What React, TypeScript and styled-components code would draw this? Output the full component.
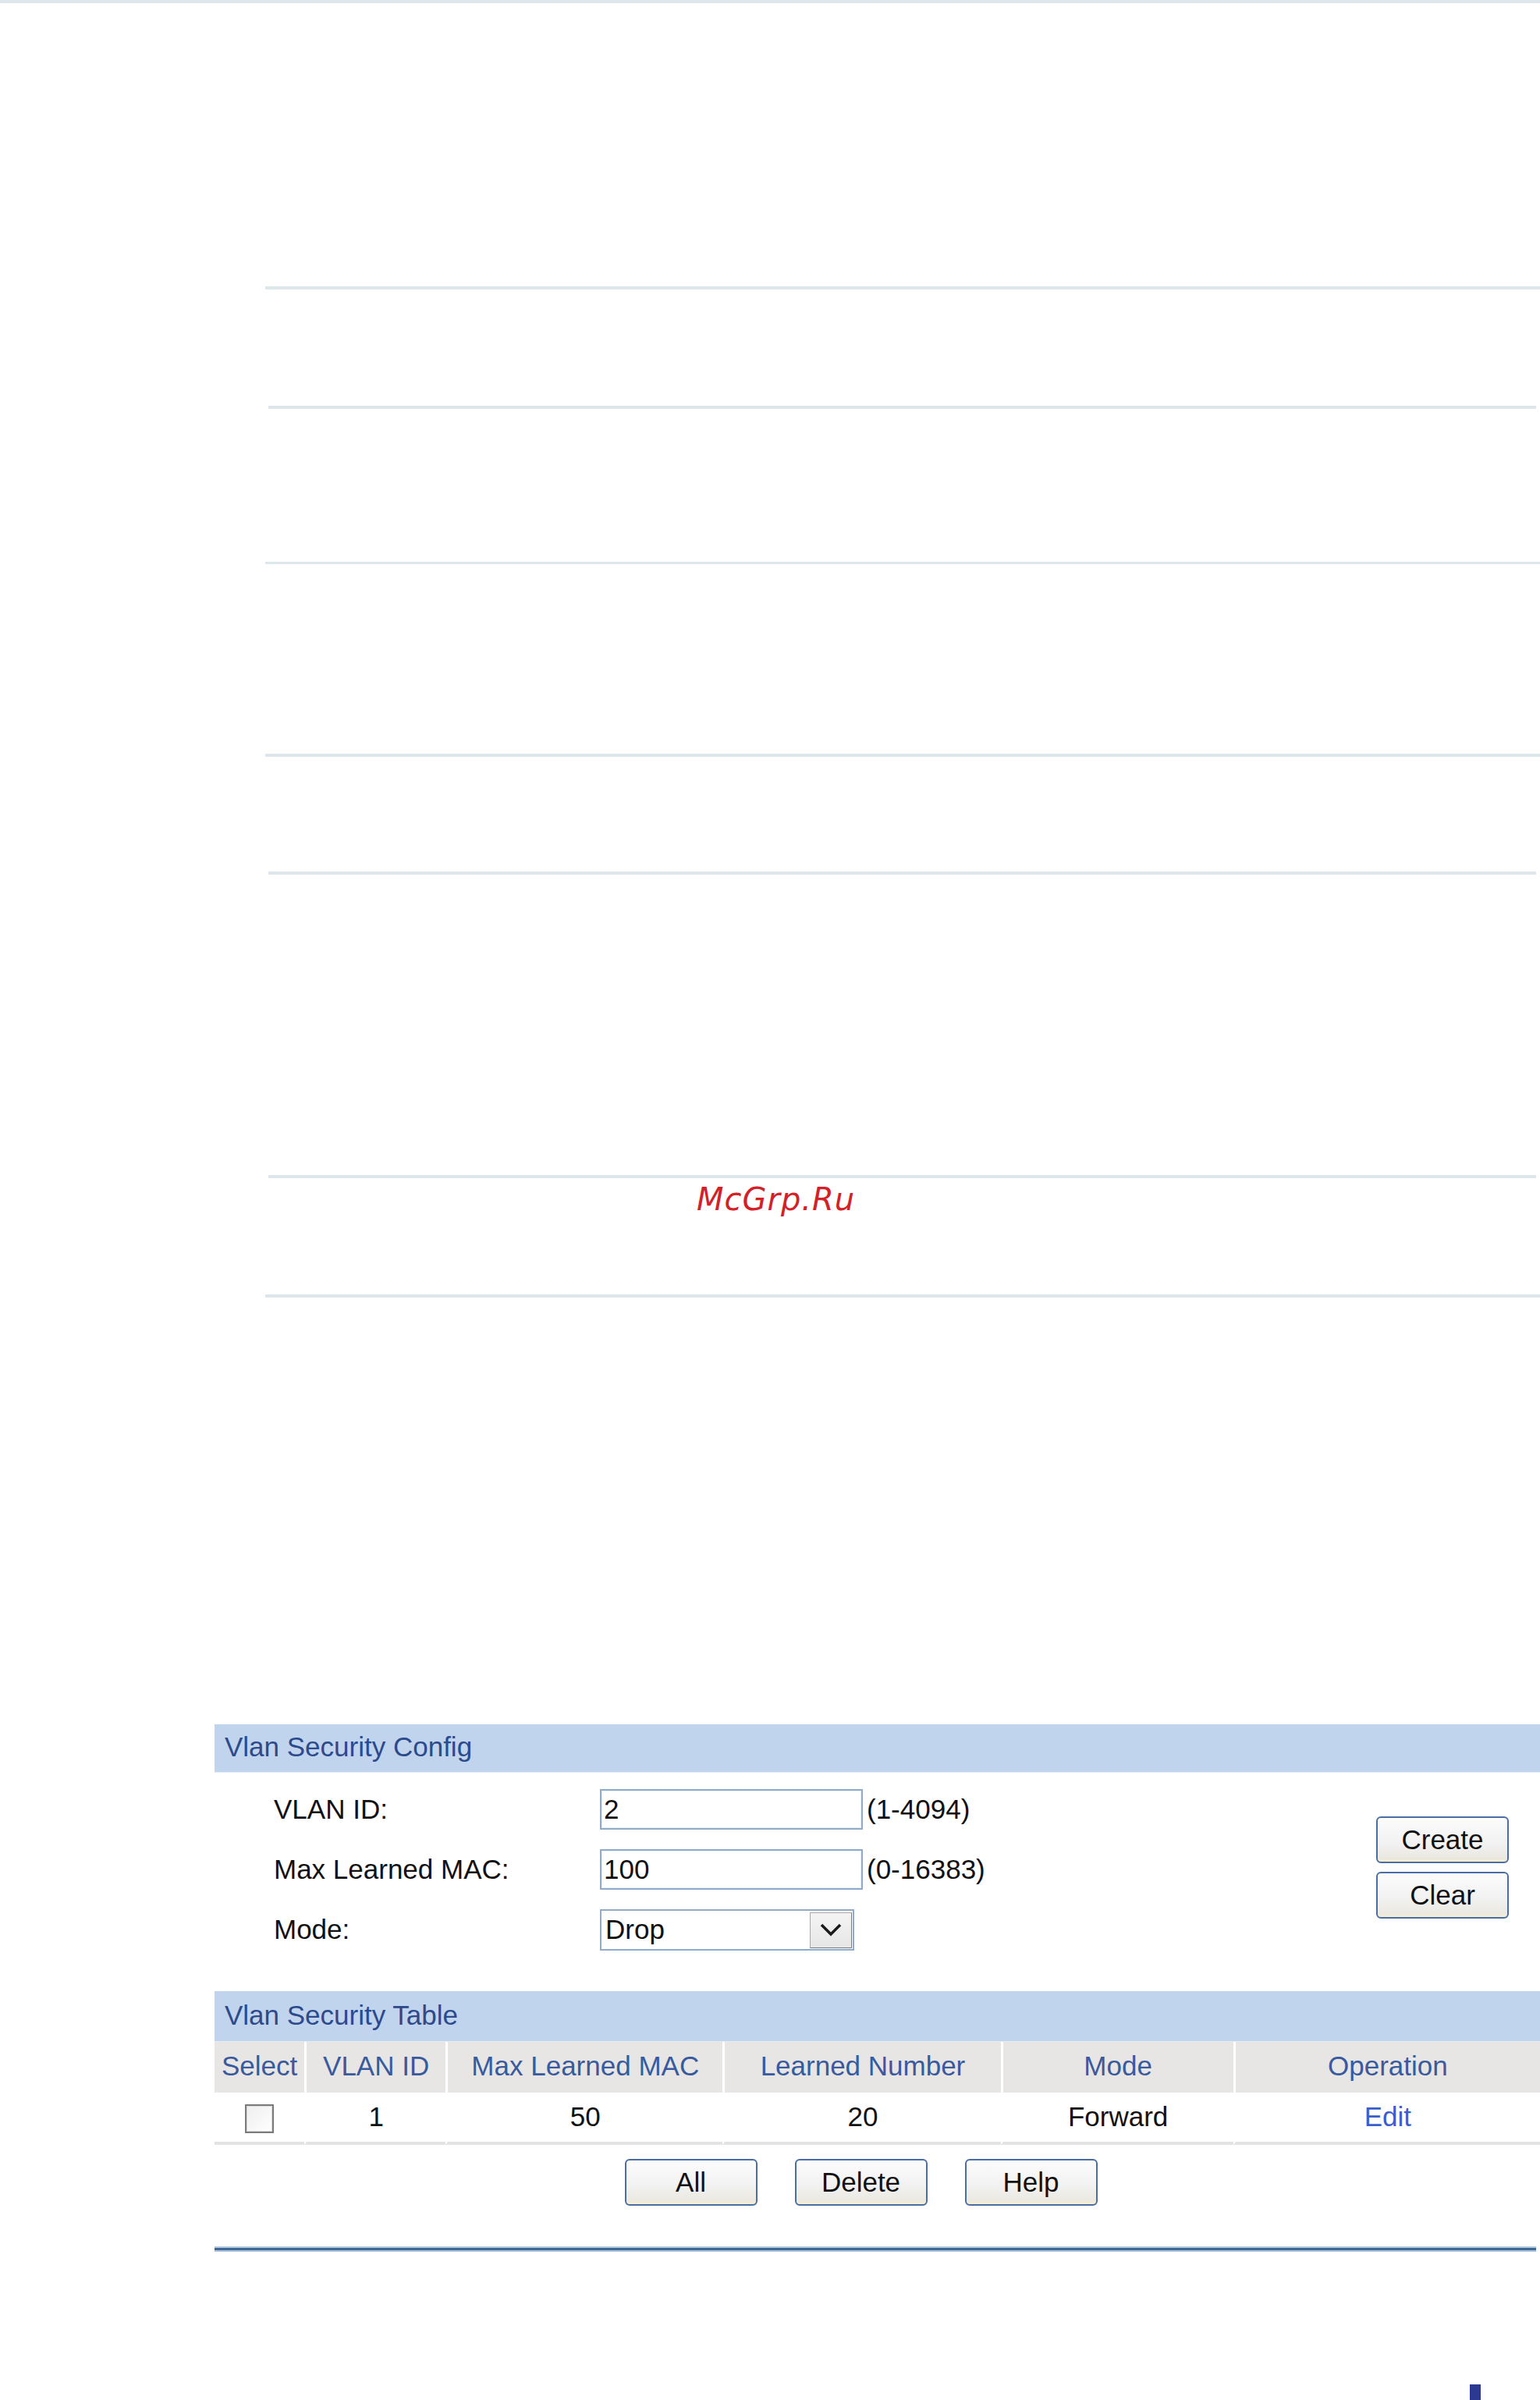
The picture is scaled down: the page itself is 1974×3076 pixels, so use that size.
import styled, { createGlobalStyle } from "styled-components";

const GlobalStyle = createGlobalStyle`
  html, body {
    margin: 0;
    padding: 0;
    background: #ffffff;
  }
  body {
    font-family: "Liberation Sans", Arial, sans-serif;
  }
`;

const rules = [
  { gap: 363, short: false },
  { gap: 149, short: true },
  { gap: 196, short: false },
  { gap: 243, short: false },
  { gap: 147, short: true },
  { gap: 385, short: true },
];

const columns = [
  { title: "Select", width: 115 },
  { title: "VLAN ID", width: 181 },
  { title: "Max Learned MAC", width: 355 },
  { title: "Learned Number", width: 356 },
  { title: "Mode", width: 298 },
  { title: "Operation", width: 393 },
];

const App = () => {
  return (
    <Page>
      <GlobalStyle />
      <TopLine />
      {rules.map((r, i) => (
        <Rule key={i} $gap={r.gap} $short={r.short} />
      ))}
      <Watermark>McGrp.Ru</Watermark>
      <Rule $gap={102} />

      <Panel>
        <SectionBar $h={62}>Vlan Security Config</SectionBar>
        <ConfigBody>
          <Fields>
            <FieldRow>
              <Label>VLAN ID:</Label>
              <TextBox>2</TextBox>
              <Hint>(1-4094)</Hint>
            </FieldRow>
            <FieldRow>
              <Label>Max Learned MAC:</Label>
              <TextBox>100</TextBox>
              <Hint>(0-16383)</Hint>
            </FieldRow>
            <FieldRow>
              <Label>Mode:</Label>
              <SelectBox>
                <SelectValue>Drop</SelectValue>
                <SelectArrow>
                  <svg width="28" height="17" viewBox="0 0 28 17">
                    <polyline
                      points="2,2 14,14 26,2"
                      fill="none"
                      stroke="#1a1a1a"
                      strokeWidth="3.5"
                    />
                  </svg>
                </SelectArrow>
              </SelectBox>
            </FieldRow>
          </Fields>
          <Actions>
            <Button>Create</Button>
            <Button>Clear</Button>
          </Actions>
        </ConfigBody>

        <SectionBar $h={65}>Vlan Security Table</SectionBar>
        <Table>
          <colgroup>
            {columns.map((c) => (
              <col key={c.title} style={{ width: c.width }} />
            ))}
          </colgroup>
          <thead>
            <tr>
              {columns.map((c) => (
                <HeadCell key={c.title}>{c.title}</HeadCell>
              ))}
            </tr>
          </thead>
          <tbody>
            <tr>
              <Cell>
                <Checkbox />
              </Cell>
              <Cell>1</Cell>
              <Cell>50</Cell>
              <Cell>20</Cell>
              <Cell>Forward</Cell>
              <Cell>
                <EditLink href="#">Edit</EditLink>
              </Cell>
            </tr>
          </tbody>
        </Table>
        <ButtonBar>
          <Button>All</Button>
          <Button>Delete</Button>
          <Button>Help</Button>
        </ButtonBar>
        <BottomRule />
      </Panel>

      <PageMark />
    </Page>
  );
};

const Page = styled.div`
  width: 1974px;
  height: 3076px;
  overflow: hidden;
  display: flex;
  flex-direction: column;
`;

const TopLine = styled.div`
  height: 4px;
  background: #dde7ec;
`;

const Rule = styled.div<{ $gap: number; $short?: boolean }>`
  height: 4px;
  background: #dce6eb;
  margin-top: ${(p) => p.$gap}px;
  margin-left: ${(p) => (p.$short ? 344 : 340)}px;
  margin-right: ${(p) => (p.$short ? 5 : 0)}px;
`;

const Watermark = styled.div`
  margin: 7px 0 0 893px;
  height: 40px;
  font-family: "DejaVu Sans", sans-serif;
  font-style: oblique;
  font-size: 40px;
  line-height: 40px;
  letter-spacing: 1px;
  color: #d42027;
`;

const Panel = styled.div`
  margin: 547px 0 0 275px;
  width: 1699px;
`;

const SectionBar = styled.div<{ $h: number }>`
  height: ${(p) => p.$h}px;
  line-height: ${(p) => p.$h - 4}px;
  background: #c1d4ee;
  color: #2d4a8c;
  font-size: 35px;
  padding-left: 13px;
  border-bottom: 1px solid #e3ebf6;
  box-sizing: border-box;
`;

const ConfigBody = styled.div`
  display: flex;
  padding: 9px 40px 40px 76px;
`;

const Fields = styled.div`
  flex: 1;
  display: flex;
  flex-direction: column;
`;

const FieldRow = styled.div`
  height: 77px;
  display: flex;
  align-items: center;
  font-size: 35px;
  color: #111;
`;

const Label = styled.div`
  width: 418px;
`;

const TextBox = styled.div`
  width: 337px;
  height: 52px;
  box-sizing: border-box;
  border: 2px solid #8eabcc;
  box-shadow: inset 0 0 0 1px #e6eef6;
  padding-left: 3px;
  display: flex;
  align-items: center;
  background: #fff;
`;

const Hint = styled.div`
  margin-left: 5px;
`;

const SelectBox = styled.div`
  width: 326px;
  height: 53px;
  box-sizing: border-box;
  border: 2px solid #8eabcc;
  display: flex;
  align-items: stretch;
  background: #fff;
`;

const SelectValue = styled.div`
  flex: 1;
  display: flex;
  align-items: center;
  padding-left: 5px;
`;

const SelectArrow = styled.div`
  width: 54px;
  margin: 2px 1px 1px 0;
  box-sizing: border-box;
  border: 1px solid #a9a9a9;
  border-right-color: #7a7a7a;
  border-bottom-color: #7a7a7a;
  background: linear-gradient(#f4f4f4, #e6e6e6);
  display: flex;
  align-items: center;
  justify-content: center;
`;

const Actions = styled.div`
  display: flex;
  flex-direction: column;
  justify-content: center;
  gap: 11px;
  padding-bottom: 6px;
`;

const Button = styled.button`
  all: unset;
  box-sizing: border-box;
  width: 170px;
  height: 60px;
  border: 2px solid #4a6ea4;
  border-radius: 6px;
  background: linear-gradient(#fcfcfc 0%, #f1f1f1 60%, #e9e6dc 100%);
  box-shadow: inset 0 -4px 0 -1px #f3ecd4;
  font-family: "Liberation Sans", Arial, sans-serif;
  font-size: 35px;
  color: #111;
  text-align: center;
  line-height: 54px;
  cursor: pointer;
`;

const Table = styled.table`
  width: 1699px;
  table-layout: fixed;
  border-collapse: separate;
  border-spacing: 0;
  font-size: 35px;
`;

const HeadCell = styled.th`
  height: 63px;
  padding: 0 0 2px;
  background: #e7e6e5;
  color: #3a5a9e;
  font-weight: normal;
  text-align: center;
  white-space: nowrap;
  border-left: 3px solid #fff;

  &:first-child {
    border-left: none;
  }
`;

const Cell = styled.td`
  height: 63px;
  padding: 0;
  color: #111;
  text-align: center;
  border-left: 3px solid #fff;
  border-bottom: 4px solid #e3e3e3;

  &:first-child {
    border-left: none;
  }
`;

const Checkbox = styled.span`
  display: inline-block;
  vertical-align: middle;
  width: 37px;
  height: 37px;
  box-sizing: border-box;
  border: 2px solid #7b7b7b;
  background: linear-gradient(135deg, #eeeeee, #ffffff);
  box-shadow: inset 0 0 0 1px #d8d8d8;
`;

const EditLink = styled.a`
  color: #3a5fcd;
  text-decoration: none;
`;

const ButtonBar = styled.div`
  display: flex;
  justify-content: center;
  gap: 48px;
  padding: 18px 42px 0 0;
`;

const BottomRule = styled.div`
  margin-top: 52px;
  width: 1694px;
  height: 7px;
  background: linear-gradient(#b7cce0 0 2px, #3b6896 2px 5px, #a9c0d8 5px);
`;

const PageMark = styled.div`
  margin: 170px 0 0 1884px;
  width: 14px;
  height: 21px;
  background: #2b3990;
`;

export default App;
